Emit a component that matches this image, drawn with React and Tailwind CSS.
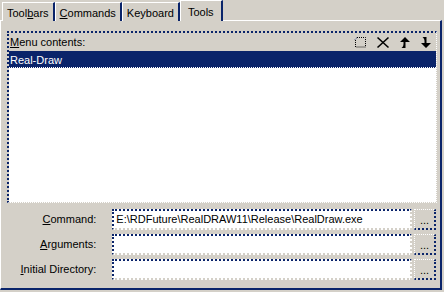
import React from "react";

const font = { fontFamily: "'Liberation Sans', Arial, sans-serif" };

function Tab({ children, active }) {
    return (
        <div
            className={
                active
                    ? "h-[21px] px-[7px] pt-[3px] bg-[#d4d0c8] border-l border-t border-white border-r-2 border-r-[#0a246a] border-r-dotted relative z-10 -mb-px"
                    : "h-[19px] px-[4px] pt-[2px] mt-[2px] bg-[#d4d0c8] border-l border-t border-white border-r-2 border-r-[#0a246a] border-r-dotted"
            }
        >
            {children}
        </div>
    );
}

function Field({ label, value }) {
    return (
        <div className="flex items-center h-[21px]">
            <div className="w-[90px] text-right">{label}</div>
            <div className="ml-[16px] w-[302px] h-[21px] bg-white border-t-2 border-l-2 border-dotted border-[#0a246a] border-r-2 border-r-[#d4d0c8] border-r-solid border-b-2 border-b-[#d4d0c8] border-b-solid px-[2px] leading-[16px] whitespace-nowrap overflow-hidden">
                {value}
            </div>
            <div className="ml-[2px] w-[22px] h-[21px] border-t border-l border-white border-r-2 border-b-2 border-dotted border-r-[#0a246a] border-b-[#0a246a] flex items-end justify-center pb-[2px] leading-none">
                ...
            </div>
        </div>
    );
}

export default function App() {
    return (
        <div className="w-[444px] h-[292px] bg-[#d4d0c8] text-[11px] text-black overflow-hidden" style={font}>
            {/* Tabs */}
            <div className="flex pl-[2px] h-[20px] items-start">
                <Tab>Tool<span className="underline">b</span>ars</Tab>
                <Tab><span className="underline">C</span>ommands</Tab>
                <Tab>Keyboard</Tab>
                <Tab active>Tools</Tab>
            </div>

            {/* Panel */}
            <div className="w-[442px] h-[270px] border-t border-l border-white border-r-2 border-r-dotted border-r-[#0a246a] border-b-2 border-b-dotted border-b-[#0a246a] pt-[10px] pl-[6px] pr-[4px]">
                <div className="w-[430px] h-[172px] border-t-2 border-l-2 border-dotted border-[#0a246a] border-r border-r-white border-r-solid border-b border-b-white border-b-solid flex flex-col">
                    <div className="h-[20px] flex items-center justify-between pl-[1px] pr-[4px] border-b-2 border-b-dotted border-b-[#0a246a]">
                        <span><span className="underline">M</span>enu contents:</span>
                        <div className="flex items-center gap-[9px]">
                            <svg width="13" height="13" viewBox="0 0 13 13">
                                <path d="M3 1.5h8.5v9.5H1.5V3.5" fill="none" stroke="#000" strokeDasharray="1 1" />
                                <path d="M1 3.5L3 1.5" stroke="#0a246a" strokeDasharray="1 1" />
                            </svg>
                            <svg width="14" height="13" viewBox="0 0 14 13">
                                <path d="M1.5 1.5l11 10M12.5 1.5l-11 10" stroke="#000" strokeWidth="1.6" />
                            </svg>
                            <svg width="12" height="13" viewBox="0 0 12 13">
                                <path d="M6 1L1 6h3.5v2c0 2-1 3-2 4h4V6H11z" fill="#000" />
                            </svg>
                            <svg width="12" height="13" viewBox="0 0 12 13">
                                <path d="M6 12L1 7h3.5V5c0-2-1-3-2-4h4v6H11z" fill="#000" />
                            </svg>
                        </div>
                    </div>
                    <div className="flex-1 bg-white">
                        <div className="h-[15px] bg-[#0a246a] text-white pl-[1px] leading-[14px] border-b border-dotted border-white">
                            Real-Draw
                        </div>
                    </div>
                </div>

                <div className="flex flex-col gap-[4px] mt-[6px]">
                    <Field label={<><span className="underline">C</span>ommand:</>} value="E:\RDFuture\RealDRAW11\Release\RealDraw.exe" />
                    <Field label={<><span className="underline">A</span>rguments:</>} value="" />
                    <Field label={<><span className="underline">I</span>nitial Directory:</>} value="" />
                </div>
            </div>
        </div>
    );
}
